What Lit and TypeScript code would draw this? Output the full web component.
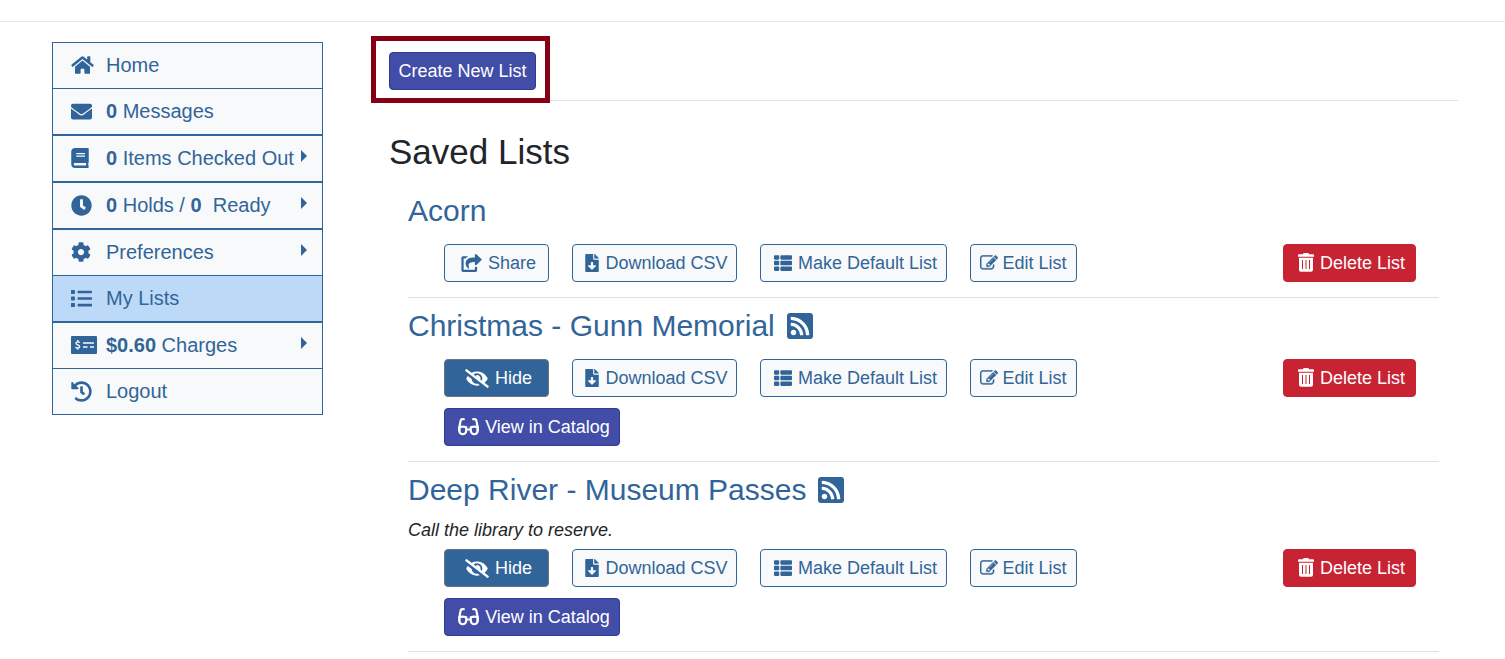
import { LitElement, html, css, svg, nothing } from "lit";
import { customElement, property } from "lit/decorators.js";

interface Glyph {
  box: string;
  w: number;
  h: number;
  body: unknown;
}

const glyph = (box: string, w: number, h: number, d: string): Glyph => ({
  box,
  w,
  h,
  body: svg`<path fill="currentColor" d=${d}></path>`,
});

const ICONS: Record<string, Glyph> = {
  home: glyph("0 0 576 512", 23, 20, "M280.37 148.26L96 300.11V464a16 16 0 0 0 16 16l112.06-.29a16 16 0 0 0 15.92-16V368a16 16 0 0 1 16-16h64a16 16 0 0 1 16 16v95.64a16 16 0 0 0 16 16.05L464 480a16 16 0 0 0 16-16V300L295.67 148.26a12.19 12.19 0 0 0-15.3 0zM571.6 251.47L488 182.56V44.05a12 12 0 0 0-12-12h-56a12 12 0 0 0-12 12v72.61L318.47 43a48 48 0 0 0-61 0L4.34 251.47a12 12 0 0 0-1.6 16.9l25.5 31A12 12 0 0 0 45.15 301l235.22-193.74a12.19 12.19 0 0 1 15.3 0L530.9 301a12 12 0 0 0 16.9-1.6l25.5-31a12 12 0 0 0-1.7-16.93z"),
  envelope: glyph("0 0 512 512", 21, 21, "M502.3 190.8c3.9-3.1 9.7-.2 9.7 4.7V400c0 26.5-21.5 48-48 48H48c-26.5 0-48-21.5-48-48V195.6c0-5 5.7-7.8 9.7-4.7 22.4 17.4 52.1 39.5 154.1 113.6 21.1 15.4 56.7 47.8 92.2 47.6 35.7.3 72-32.8 92.3-47.6 102-74.1 131.6-96.3 154-113.7zM256 320c23.2.4 56.6-29.2 73.4-41.4 132.7-96.3 142.8-104.7 173.4-128.7 5.8-4.5 9.2-11.5 9.2-18.9v-19c0-26.5-21.5-48-48-48H48c-26.5 0-48 21.5-48 48v19c0 7.4 3.4 14.3 9.2 18.9 30.6 23.9 40.7 32.4 173.4 128.7 16.8 12.2 50.2 41.8 73.4 41.4z"),
  book: glyph("0 0 448 512", 18, 20, "M448 360V24c0-13.3-10.7-24-24-24H96C43 0 0 43 0 96v320c0 53 43 96 96 96h328c13.3 0 24-10.7 24-24v-16c0-7.5-3.5-14.3-8.9-18.7-4.2-15.4-4.2-59.3 0-74.7 5.4-4.3 8.9-11.1 8.9-18.6zM128 134c0-3.3 2.7-6 6-6h212c3.3 0 6 2.7 6 6v20c0 3.3-2.7 6-6 6H134c-3.3 0-6-2.7-6-6v-20zm0 64c0-3.3 2.7-6 6-6h212c3.3 0 6 2.7 6 6v20c0 3.3-2.7 6-6 6H134c-3.3 0-6-2.7-6-6v-20zm253.4 250H96c-17.7 0-32-14.3-32-32 0-17.6 14.4-32 32-32h285.4c-1.9 17.1-1.9 46.9 0 64z"),
  clock: glyph("0 0 512 512", 21, 21, "M256 8C119 8 8 119 8 256s111 248 248 248 248-111 248-248S393 8 256 8zm57.100 350.100L224.900 294c-3.100-2.300-4.900-5.900-4.900-9.700V116c0-6.600 5.400-12 12-12h48c6.600 0 12 5.400 12 12v137.700l63.500 46.200c5.400 3.900 6.500 11.400 2.600 16.800l-28.200 38.800c-3.900 5.300-11.400 6.500-16.800 2.600z"),
  cog: glyph("0 0 512 512", 20, 20, "M487.4 315.7l-42.6-24.6c4.3-23.2 4.3-47 0-70.2l42.6-24.6c4.9-2.8 7.1-8.6 5.5-14-11.1-35.6-30-67.8-54.7-94.6-3.8-4.1-10-5.1-14.8-2.3L380.8 110c-17.9-15.4-38.5-27.3-60.8-35.1V25.8c0-5.6-3.900-10.500-9.400-11.700-36.700-8.200-74.300-7.800-109.200 0-5.500 1.200-9.400 6.100-9.400 11.700V75c-22.200 7.900-42.800 19.800-60.800 35.100L88.700 85.500c-4.900-2.800-11-1.900-14.800 2.300-24.700 26.700-43.600 58.900-54.700 94.600-1.700 5.400.6 11.200 5.500 14L67.300 221c-4.300 23.200-4.300 47 0 70.200l-42.600 24.600c-4.900 2.800-7.100 8.600-5.500 14 11.100 35.600 30 67.800 54.700 94.600 3.800 4.100 10 5.100 14.800 2.300l42.600-24.600c17.900 15.400 38.500 27.300 60.800 35.100v49.200c0 5.600 3.900 10.500 9.400 11.700 36.700 8.200 74.300 7.800 109.200 0 5.500-1.200 9.400-6.100 9.400-11.700v-49.200c22.200-7.900 42.800-19.800 60.800-35.100l42.600 24.600c4.900 2.800 11 1.900 14.800-2.300 24.700-26.700 43.600-58.900 54.700-94.600 1.500-5.500-.7-11.300-5.600-14.100zM256 336c-44.100 0-80-35.900-80-80s35.900-80 80-80 80 35.900 80 80-35.900 80-80 80z"),
  list: glyph("0 0 512 512", 21, 21, "M80 368H16a16 16 0 0 0-16 16v64a16 16 0 0 0 16 16h64a16 16 0 0 0 16-16v-64a16 16 0 0 0-16-16zm0-320H16A16 16 0 0 0 0 64v64a16 16 0 0 0 16 16h64a16 16 0 0 0 16-16V64a16 16 0 0 0-16-16zm0 160H16a16 16 0 0 0-16 16v64a16 16 0 0 0 16 16h64a16 16 0 0 0 16-16v-64a16 16 0 0 0-16-16zm416 176H176a16 16 0 0 0-16 16v32a16 16 0 0 0 16 16h320a16 16 0 0 0 16-16v-32a16 16 0 0 0-16-16zm0-320H176a16 16 0 0 0-16 16v32a16 16 0 0 0 16 16h320a16 16 0 0 0 16-16V80a16 16 0 0 0-16-16zm0 160H176a16 16 0 0 0-16 16v32a16 16 0 0 0 16 16h320a16 16 0 0 0 16-16v-32a16 16 0 0 0-16-16z"),
  money: {
    box: "0 0 26 18",
    w: 26,
    h: 18,
    body: svg`
      <rect width="26" height="18" rx="1" fill="currentColor"></rect>
      <path d="M12 7h11M12 11h4.500M19 11h4" stroke="#f8f9fb" stroke-width="1.500"></path>
      <path d="M8.600 6.800C8.200 5.600 5 5.400 5 7.300c0 1.900 3.700 1.300 3.700 3.200 0 1.900-3.500 1.800-4 .4M6.800 4v2M6.800 11.500v2.200" fill="none" stroke="#f8f9fb" stroke-width="1.400"></path>`,
  },
  history: glyph("0 0 512 512", 21, 21, "M504 255.531c.253 136.64-111.18 248.372-247.82 248.468-59.015.042-113.223-20.53-155.822-54.911-11.077-8.94-11.905-25.541-1.839-35.607l11.267-11.267c8.609-8.609 22.353-9.551 31.891-1.984C173.062 425.135 212.781 440 256 440c101.705 0 184-82.311 184-184 0-101.705-82.311-184-184-184-48.814 0-93.149 18.969-126.068 49.932l50.754 50.754c10.08 10.08 2.941 27.314-11.313 27.314H24c-8.837 0-16-7.163-16-16V38.627c0-14.254 17.234-21.393 27.314-11.314l49.372 49.372C129.209 34.136 189.552 8 256 8c136.81 0 247.747 110.78 248 247.531zm-180.912 78.784l9.823-12.63c8.138-10.463 6.253-25.542-4.21-33.679L288 256.349V152c0-13.255-10.745-24-24-24h-16c-13.255 0-24 10.745-24 24v135.651l65.409 50.874c10.463 8.137 25.541 6.253 33.679-4.21z"),
  share: glyph("0 0 576 512", 21, 18, "M568.482 177.448L424.479 313.433C409.3 327.768 384 317.14 384 295.985v-71.963c-144.575.97-205.566 35.113-164.775 171.353 4.483 14.973-12.846 26.567-25.006 17.33C155.252 383.105 120 326.488 120 269.339c0-143.937 117.599-172.5 264-173.312V24.012c0-21.174 25.317-31.768 40.479-17.448l144.003 135.988c10.02 9.463 10.028 25.425 0 34.896zM384 379.128V448H64V128h50.916a11.99 11.99 0 0 0 8.648-3.693c14.953-15.568 32.237-27.89 51.014-37.676C185.708 80.83 181.584 64 169.033 64H48C21.49 64 0 85.49 0 112v352c0 26.51 21.49 48 48 48h352c26.51 0 48-21.49 48-48v-88.806c0-8.288-8.197-14.066-16.011-11.302a71.83 71.83 0 0 1-34.189 3.377c-7.27-1.046-13.8 4.514-13.8 11.859z"),
  eyeSlash: glyph("0 0 640 512", 24, 19, "M320 400c-75.85 0-137.25-58.71-142.9-133.11L72.2 185.82c-13.79 17.3-26.48 35.59-36.72 55.59a32.35 32.35 0 0 0 0 29.19C89.71 376.41 197.07 448 320 448c26.91 0 52.87-4 77.89-10.46L346 397.39a144.13 144.13 0 0 1-26 2.61zm313.82 58.1l-110.55-85.44a331.25 331.25 0 0 0 81.25-102.07 32.35 32.35 0 0 0 0-29.19C550.29 135.59 442.93 64 320 64a308.15 308.15 0 0 0-147.32 37.7L45.46 3.37A16 16 0 0 0 23 6.18L3.37 31.45A16 16 0 0 0 6.18 53.9l588.36 454.73a16 16 0 0 0 22.46-2.81l19.64-25.27a16 16 0 0 0-2.82-22.45zm-183.72-142l-39.3-30.38A94.75 94.75 0 0 0 416 256a94.76 94.76 0 0 0-121.31-92.21A47.65 47.65 0 0 1 304 192a46.64 46.64 0 0 1-1.54 10l-73.61-56.89A142.31 142.31 0 0 1 320 112a143.92 143.92 0 0 1 144 144c0 21.63-5.29 41.79-13.9 60.11z"),
  download: glyph("0 0 384 512", 14, 18, "M224 136V0H24C10.7 0 0 10.7 0 24v464c0 13.3 10.7 24 24 24h336c13.3 0 24-10.7 24-24V160H248c-13.2 0-24-10.8-24-24zm76.45 211.36l-96.42 95.7c-6.65 6.61-17.39 6.61-24.04 0l-96.42-95.7C73.42 337.29 80.54 320 94.82 320H160v-80c0-8.84 7.16-16 16-16h32c8.84 0 16 7.16 16 16v80h65.18c14.28 0 21.4 17.29 11.27 27.36zM377 105L279.1 7c-4.5-4.5-10.6-7-17-7H256v128h128v-6.100c0-6.300-2.500-12.400-7-16.900z"),
  thList: glyph("0 32 512 448", 18, 16, "M149.333 216v80c0 13.255-10.745 24-24 24H24c-13.255 0-24-10.745-24-24v-80c0-13.255 10.745-24 24-24h101.333c13.255 0 24 10.745 24 24zM0 376v80c0 13.255 10.745 24 24 24h101.333c13.255 0 24-10.745 24-24v-80c0-13.255-10.745-24-24-24H24c-13.255 0-24 10.745-24 24zM125.333 32H24C10.745 32 0 42.745 0 56v80c0 13.255 10.745 24 24 24h101.333c13.255 0 24-10.745 24-24V56c0-13.255-10.745-24-24-24zm80 448H488c13.255 0 24-10.745 24-24v-80c0-13.255-10.745-24-24-24H205.333c-13.255 0-24 10.745-24 24v80c0 13.255 10.745 24 24 24zm-24-424v80c0 13.255 10.745 24 24 24H488c13.255 0 24-10.745 24-24V56c0-13.255-10.745-24-24-24H205.333c-13.255 0-24 10.745-24 24zm24 264H488c13.255 0 24-10.745 24-24v-80c0-13.255-10.745-24-24-24H205.333c-13.255 0-24 10.745-24 24v80c0 13.255 10.745 24 24 24z"),
  edit: {
    box: "0 128 1792 1536",
    w: 18,
    h: 16,
    body: svg`<path fill="currentColor" stroke="currentColor" stroke-width="30" d="M888 1184l116-116-152-152-116 116v56h96v96h56zm440-720q-16-16-33 1l-350 350q-17 17-1 33t33-1l350-350q17-17 1-33zm80 594v190q0 119-84.500 203.500t-203.500 84.500h-832q-119 0-203.500-84.500t-84.500-203.500v-832q0-119 84.500-203.500t203.500-84.500h832q63 0 117 25 15 7 18 23 3 17-9 29l-49 49q-14 14-32 8-23-6-45-6h-832q-66 0-113 47t-47 113v832q0 66 47 113t113 47h832q66 0 113-47t47-113v-126q0-13 9-22l64-64q15-15 35-7t20 29zm-96-738l288 288-672 672h-288v-288zm444 132l-92 92-288-288 92-92q28-28 68-28t68 28l152 152q28 28 28 68t-28 68z"></path>`,
  },
  trash: {
    box: "0 0 16 20",
    w: 16,
    h: 20,
    body: svg`
      <path fill="currentColor" d="M5 1.200Q5 0 6.300 0h3.400Q11 0 11 1.200h4q1 0 1 1V3.700H0V2.200q0-1 1-1z"></path>
      <path fill="currentColor" fill-rule="evenodd" d="M1 4.700h14v12q0 2-2 2H3q-2 0-2-2zM4 7v9h1V7zM7.500 7v9h1V7zM11 7v9h1V7z"></path>`,
  },
  glasses: {
    box: "0 0 21 18",
    w: 21,
    h: 18,
    body: svg`
      <g fill="none" stroke="currentColor" stroke-width="2.200" stroke-linecap="round">
        <path d="M5.800 1.200C3.200.6 2.600 2 2.300 4L1.300 9.500v3M15.200 1.200c2.600-.6 3.200.8 3.500 2.800l1 5.500v3"></path>
        <path d="M1.300 9.300C3.500 8.400 6 8.600 8.200 9.300v3.500a3.450 3.450 0 0 1-6.900 0zM19.700 9.300c-2.200-.9-4.700-.7-6.900 0v3.500a3.450 3.450 0 0 0 6.900 0z"></path>
        <path d="M9 11.500h3"></path>
      </g>`,
  },
  rss: glyph("0 32 448 448", 26, 26, "M400 32H48C21.49 32 0 53.49 0 80v352c0 26.51 21.49 48 48 48h352c26.51 0 48-21.49 48-48V80c0-26.51-21.49-48-48-48zM112 416c-26.51 0-48-21.49-48-48s21.49-48 48-48 48 21.49 48 48-21.49 48-48 48zm157.533 0h-34.335c-6.011 0-11.051-4.636-11.442-10.634-5.214-80.05-69.243-143.92-149.123-149.123-5.997-.39-10.633-5.431-10.633-11.442v-34.335c0-6.535 5.468-11.777 11.994-11.425 110.546 5.974 198.997 94.536 204.964 204.964.352 6.526-4.89 11.995-11.425 11.995zm103.027 0h-34.334c-6.161 0-11.175-4.882-11.427-11.038-5.598-136.535-115.204-246.161-251.76-251.76C68.882 152.949 64 147.935 64 141.774V107.44c0-6.454 5.338-11.664 11.787-11.432 167.83 6.025 302.21 141.191 308.205 308.205.232 6.449-4.978 11.787-11.432 11.787z"),
  caret: glyph("0 0 6 12", 6, 12, "M0 0l6 6-6 6z"),
};

const icon = (name: string) => {
  const g = ICONS[name];
  return html`<svg viewBox=${g.box} width=${g.w} height=${g.h} aria-hidden="true">${g.body}</svg>`;
};

interface MenuItem {
  icon: string;
  label: unknown;
  submenu?: boolean;
  split?: boolean;
  active?: boolean;
}

const MENU: MenuItem[] = [
  { icon: "home", label: "Home" },
  { icon: "envelope", label: html`<b>0</b> Messages` },
  { icon: "book", label: html`<b>0</b> Items Checked Out`, submenu: true, split: true },
  { icon: "clock", label: html`<b>0</b> Holds / <b>0</b> &nbsp;Ready`, submenu: true, split: true },
  { icon: "cog", label: "Preferences", submenu: true, split: true },
  { icon: "list", label: "My Lists", active: true },
  { icon: "money", label: html`<b>$0.60</b> Charges`, submenu: true, split: true },
  { icon: "history", label: "Logout" },
];

interface SavedList {
  name: string;
  shared: boolean;
  note?: string;
}

const LISTS: SavedList[] = [
  { name: "Acorn", shared: false },
  { name: "Christmas - Gunn Memorial", shared: true },
  { name: "Deep River - Museum Passes", shared: true, note: "Call the library to reserve." },
];

const buttonStyles = css`
  button {
    box-sizing: border-box;
    display: flex;
    align-items: center;
    justify-content: center;
    gap: 6px;
    height: 38px;
    margin: 0;
    padding: 0 8px;
    border: 1px solid #316599;
    border-radius: 4px;
    background: #f8f9fb;
    color: #316599;
    font: 18px/26px "Liberation Sans", Arial, sans-serif;
    white-space: nowrap;
    cursor: pointer;
  }
  .iconic {
    padding-left: 12px;
  }
  .edit {
    gap: 4px;
  }
  .primary {
    background: #424da7;
    border-color: #2f3a92;
    color: #fff;
  }
  .hide {
    background: #316599;
    border-color: #6c757d;
    color: #fff;
  }
  .danger {
    background: #c82333;
    border-color: #c82333;
    color: #fff;
  }
  svg {
    display: block;
    flex: none;
  }
`;

@customElement("account-menu")
export class AccountMenu extends LitElement {
  static styles = css`
    :host {
      display: block;
    }
    ul {
      margin: 0;
      padding: 0;
      list-style: none;
      border: 1px solid #316599;
      border-top: 0;
      background: #f8f9fb;
    }
    li {
      border-top: 1px solid #316599;
    }
    .split {
      border-top-width: 2px;
    }
    .active {
      background: #bcdaf8;
    }
    a {
      display: grid;
      grid-template-columns: 35px 1fr 6px;
      align-items: center;
      padding: 7px 15px 8px 18px;
      color: #316599;
      font-size: 20px;
      line-height: 30px;
      text-decoration: none;
      white-space: nowrap;
    }
    svg {
      display: block;
    }
    .caret {
      padding-bottom: 5px;
    }
  `;

  render() {
    return html`<nav aria-label="Account">
      <ul>
        ${MENU.map(
          (m) => html`<li class="${m.split ? "split" : ""} ${m.active ? "active" : ""}">
            <a href="#">
              ${icon(m.icon)}
              <span>${m.label}</span>
              ${m.submenu ? html`<span class="caret">${icon("caret")}</span>` : nothing}
            </a>
          </li>`
        )}
      </ul>
    </nav>`;
  }
}

@customElement("saved-list")
export class SavedListRow extends LitElement {
  @property({ attribute: false }) list!: SavedList;

  static styles = [
    buttonStyles,
    css`
      :host {
        display: block;
        padding: 10px 0 15px;
        border-bottom: 1px solid #dfe0e1;
      }
      h2 {
        display: flex;
        align-items: center;
        gap: 12px;
        margin: 0 0 15px;
        font-size: 30px;
        line-height: 36px;
        font-weight: 400;
      }
      a {
        color: #316599;
        text-decoration: none;
      }
      p {
        margin: -6px 0 6px;
        line-height: 26px;
        font-style: italic;
      }
      .actions {
        display: grid;
        grid-template-columns: 105px 165px 187px 107px 1fr;
        gap: 11px 23px;
        padding: 0 23px 0 36px;
      }
      .danger {
        justify-self: end;
        width: 133px;
      }
      .catalog {
        grid-column: 1 / 3;
        justify-self: start;
        width: 176px;
      }
    `,
  ];

  render() {
    const { name, shared, note } = this.list;
    return html`
      <h2>
        <a href="#">${name}</a>
        ${shared ? html`<a href="#" aria-label="RSS feed">${icon("rss")}</a>` : nothing}
      </h2>
      ${note ? html`<p>${note}</p>` : nothing}
      <div class="actions">
        ${shared
          ? html`<button class="iconic hide">${icon("eyeSlash")}Hide</button>`
          : html`<button class="iconic">${icon("share")}Share</button>`}
        <button class="iconic">${icon("download")}Download CSV</button>
        <button class="iconic">${icon("thList")}Make Default List</button>
        <button class="edit">${icon("edit")}Edit List</button>
        <button class="iconic danger">${icon("trash")}Delete List</button>
        ${shared
          ? html`<button class="iconic primary catalog">${icon("glasses")}View in Catalog</button>`
          : nothing}
      </div>
    `;
  }
}

@customElement("app-root")
export class AppRoot extends LitElement {
  static styles = [
    buttonStyles,
    css`
      :host {
        display: block;
        padding-top: 21px;
        background: #fff;
        color: #212529;
        font: 18px/26px "Liberation Sans", Arial, sans-serif;
      }
      .page {
        display: grid;
        grid-template-columns: 271px minmax(0, 1fr);
        align-items: start;
        gap: 66px;
        padding: 20px 47px 0 52px;
        border-top: 1px solid #e7e7e7;
      }
      main {
        padding-top: 10px;
      }
      .toolbar {
        padding-bottom: 10px;
        border-bottom: 1px solid #dfe0e1;
      }
      .callout {
        position: relative;
        width: 147px;
      }
      .callout::after {
        content: "";
        position: absolute;
        inset: -16px -14px -13px -18px;
        border: 5px solid #850014;
        pointer-events: none;
      }
      .callout button {
        width: 100%;
      }
      h1 {
        margin: 30px 0 10px;
        font-size: 35px;
        line-height: 42px;
        font-weight: 400;
      }
      .lists {
        padding: 0 19px;
      }
    `,
  ];

  render() {
    return html`
      <div class="page">
        <account-menu></account-menu>
        <main>
          <div class="toolbar">
            <div class="callout"><button class="primary">Create New List</button></div>
          </div>
          <h1>Saved Lists</h1>
          <div class="lists">${LISTS.map((l) => html`<saved-list .list=${l}></saved-list>`)}</div>
        </main>
      </div>
    `;
  }
}
